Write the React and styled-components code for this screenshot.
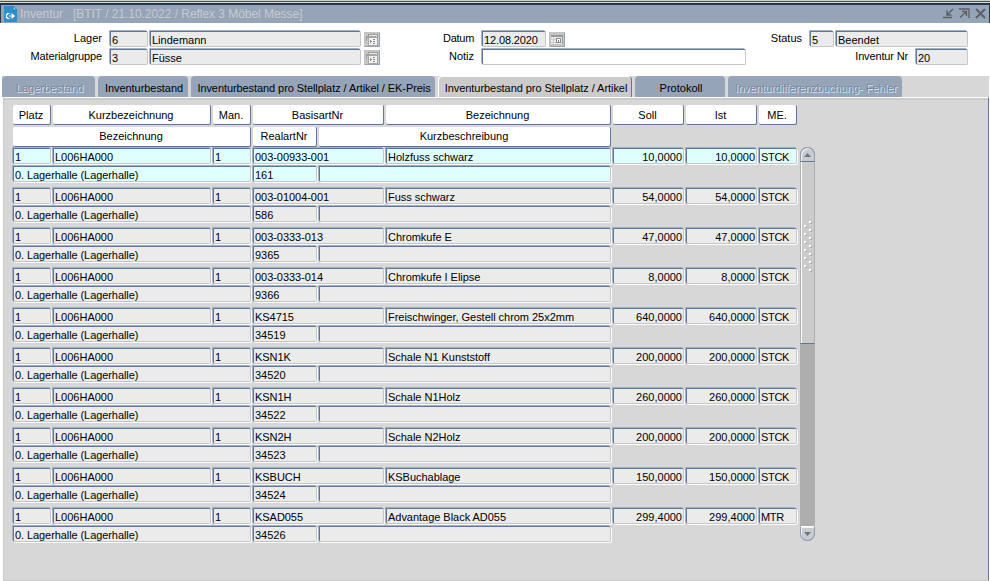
import React from 'react';
import styled, { createGlobalStyle } from "styled-components";


const GlobalStyle = createGlobalStyle`
  * {
    box-sizing: border-box;
  }
  body {
    margin: 0;
    overflow: hidden;
    background: #fff;
    color: #000;
    font-family: "Liberation Sans", Arial, sans-serif;
    font-size: 11px;
  }
`;

const Window = styled.div`
  width: 990px;
  height: 581px;
  display: flex;
  flex-direction: column;
`;

const TopEdge = styled.div`
  height: 5px;
  flex: none;
  background: linear-gradient(#c9d1c9 0 1px, #4c5358 1px 2px, #d2d9d2 2px 3px, #26374c 3px 5px);
`;

const TitleBar = styled.div`
  height: 18px;
  flex: none;
  display: flex;
  align-items: center;
  padding: 0 3px 0 3px;
  background: #96a4b8;
  border-left: 1px solid #26374c;
  border-right: 1px solid #26374c;
  svg {
    flex: none;
  }
`;

const Title = styled.div`
  flex: 1;
  padding-left: 3px;
  font-size: 12px;
  line-height: 18px;
  letter-spacing: -0.04px;
  white-space: pre;
  color: #c5cad0;
`;

const WindowButtons = styled.div`
  display: flex;
  gap: 5px;
  margin-top: -1px;
`;

const Form = styled.div`
  height: 53px;
  flex: none;
  padding-top: 7px;
  background: #fff;
`;

const FormRow = styled.div`
  height: 18px;
  display: flex;
`;

const Label = styled.div`
  width: ${(p) => p.$width}px;
  padding-right: 7px;
  text-align: right;
  line-height: 16px;
  letter-spacing: ${(p) => p.$spacing || 0}px;
  white-space: nowrap;
`;

const Field = styled.div`
  width: ${(p) => (p.$width ? p.$width - 2 + "px" : "auto")};
  height: 16px;
  margin: 1px;
  padding: ${(p) => (p.$right ? "0 1px 0 0" : "0 0 0 1px")};
  grid-column: ${(p) => p.$col || "auto"};
  background: ${(p) => p.$bg || "#ebebeb"};
  border: 1px solid #5f7898;
  border-right-color: #c6c6c6;
  border-bottom-color: #c6c6c6;
  border-radius: 1px 2px 2px 2px;
  box-shadow: -1px -1px 0 #a3b0c2, 1px 1px 0 #fff;
  line-height: 16px;
  letter-spacing: ${(p) => p.$spacing || 0}px;
  text-align: ${(p) => (p.$right ? "right" : "left")};
  white-space: nowrap;
`;

const PickButton = styled.div`
  width: 16px;
  height: 15px;
  margin: 2px 0 0 2px;
  background: #c6c6c6;
  border: 1px solid #c0c3c8;
  border-right-color: #94a3b7;
  border-bottom-color: #94a3b7;
  svg {
    display: block;
  }
`;

const Tabs = styled.div`
  height: 21px;
  flex: none;
  display: flex;
  gap: 3px;
  margin: 0 1px 0 2px;
  background: #d7d7d7;
`;

const Tab = styled.div`
  width: ${(p) => p.$width}px;
  height: 21px;
  padding: 4px 0 0 2px;
  border-radius: 4px 4px 0 0;
  text-align: center;
  line-height: 16px;
  letter-spacing: ${(p) => p.$spacing || 0}px;
  white-space: nowrap;
  background: ${(p) => (p.$active ? "#cbcbcb" : "#96a4b8")};
  color: ${(p) => (p.$disabled ? "#7388a5" : "#000")};
  text-shadow: ${(p) => (p.$disabled ? "1px 1px 0 #dfe4ea" : "none")};
  box-shadow: ${(p) => (p.$active ? "inset 1px 1px 0 #fff, inset -1px 0 0 #5f7898" : "none")};
`;

const Panel = styled.div`
  flex: 1;
  margin: 0 1px 0 3px;
  padding: 4px 0 0 8px;
  display: flex;
  background: #d7d7d7;
  border: 1px solid #cacaca;
  border-top-color: #fff;
  border-right-color: #5f7898;
  box-shadow: inset 0 2px 0 #cbcbcb;
`;

const Table = styled.div`
  width: 786px;
`;

const Columns = styled.div`
  display: grid;
  grid-template-columns: 40px 160px 40px 66px 67px 227px 73px 73px 40px;
`;

const HeaderRows = styled(Columns)`
  padding-top: 3px;
  row-gap: 2px;
  height: 45px;
  grid-auto-rows: 20px;
`;

const HeaderCell = styled.div`
  grid-column: ${(p) => p.$col};
  height: 20px;
  margin: 0 1px;
  padding-right: 1px;
  background: #fff;
  border-right: 1px solid #5f7898;
  border-bottom: 1px solid #5f7898;
  border-radius: 2px;
  line-height: ${(p) => (p.$lower ? 18 : 20)}px;
  text-align: center;
`;

const Record = styled(Columns)`
  height: 40px;
  grid-auto-rows: 18px;
`;

const ScrollBar = styled.div`
  width: 15px;
  height: 394px;
  margin: 45px 0 0 2px;
  display: flex;
  flex-direction: column;
  border-radius: 8px;
  background: #aeaeae;
`;

const ScrollButton = styled.div`
  height: 15px;
  display: flex;
  align-items: center;
  justify-content: center;
  background: #cbcbcb;
  border: 1px solid #8b9cb3;
  border-radius: ${(p) => (p.$up ? "8px 8px 0 0" : "0 0 8px 8px")};
  border-top-color: ${(p) => (p.$up ? "#8b9cb3" : "#fff")};
  border-bottom-color: ${(p) => (p.$up ? "#5f7898" : "#8b9cb3")};
  box-shadow: inset 1px 1px 0 #f4f4f4;
`;

const Thumb = styled.div`
  height: 182px;
  padding: 59px 0 0 3px;
  background: #cbcbcb;
  border: 1px solid #b0b0b0;
  border-top: 0;
  border-bottom: 1px solid #5f7898;
  box-shadow: inset 1px 0 0 #fff;
`;

const Track = styled.div`
  flex: 1;
  background: #aeaeae;
`;

const records = [
  ["003-00933-001", "Holzfuss schwarz", "10,0000", "STCK", "161"],
  ["003-01004-001", "Fuss schwarz", "54,0000", "STCK", "586"],
  ["003-0333-013", "Chromkufe E", "47,0000", "STCK", "9365"],
  ["003-0333-014", "Chromkufe I Elipse", "8,0000", "STCK", "9366"],
  ["KS4715", "Freischwinger, Gestell chrom 25x2mm", "640,0000", "STCK", "34519"],
  ["KSN1K", "Schale N1 Kunststoff", "200,0000", "STCK", "34520"],
  ["KSN1H", "Schale N1Holz", "260,0000", "STCK", "34522"],
  ["KSN2H", "Schale N2Holz", "200,0000", "STCK", "34523"],
  ["KSBUCH", "KSBuchablage", "150,0000", "STCK", "34524"],
  ["KSAD055", "Advantage Black AD055", "299,4000", "MTR", "34526"],
];

const AppIcon = () => (
  <svg width="13" height="17" viewBox="0 0 13 17">
    <path d="M0 0h9l4 4v12H0z" fill="#2d8fd0" />
    <path d="M9 0v4h4z" fill="#8fc4e6" stroke="#2272a8" strokeWidth=".7" />
    <path d="M5.500 7.500H3.500v1h-1v3h1v1h2M5 10h2" fill="none" stroke="#fff" strokeWidth="1.2" />
    <path d="M7.500 7l3.500 3-3.500 3z" fill="#fff" />
  </svg>
);

const ListIcon = () => (
  <svg width="14" height="13" viewBox="0 0 14 13" shapeRendering="crispEdges">
    <path d="M3 1h10v6h-1V3H3z" fill="#999" />
    <path d="M4 2h8v1H4z" fill="#f0f0f0" />
    <path d="M1 3h10v2H2v3H1z" fill="#a0a0a0" />
    <path d="M3 5h9v7H3z" fill="#f2f2f2" />
    <path d="M3 4h9v8H3V5" fill="none" stroke="#a8a8a8" />
    <path d="M5 7h1v3H5zM6 8h1v1H6zM8 6h2v1H8zM8 8h2v1H8zM8 10h2v1H8z" fill="#8c8c8c" />
  </svg>
);

const CalendarIcon = () => (
  <svg width="14" height="13" viewBox="0 0 14 13" shapeRendering="crispEdges">
    <path d="M1 2h12v9H1z" fill="#ececec" />
    <path d="M1 2h12v2H1zM12 4h1v7h-1z" fill="#999" />
    <path d="M1 6.500h6M1 9.500h11M3.500 4v7" stroke="#cfcfcf" />
    <path d="M6.500 5.500h4v4h-4z" fill="#fff" stroke="#8a8a8a" />
    <path d="M8 7h1v2H8z" fill="#8a8a8a" />
  </svg>
);

const Grip = () => (
  <svg width="9" height="52" viewBox="0 0 9 52" shapeRendering="crispEdges">
    {[...Array(13)].map((_, i) => {
      const x = i % 2 ? 0 : 5;
      const y = i * 4;
      return (
        <g key={i}>
          <path d={`M${x + 1} ${y + 1}h2v2h-2z`} fill="#9fabbc" />
          <path d={`M${x} ${y}h2v2h-2z`} fill="#fff" />
        </g>
      );
    })}
  </svg>
);

const App = () => {
  return (
    <Window>
      <GlobalStyle />
      <TopEdge />
      <TitleBar>
        <AppIcon />
        <Title>{"Inventur   [BTIT / 21.10.2022 / Reflex 3 Möbel Messe]"}</Title>
        <WindowButtons>
          <svg width="11" height="11" viewBox="0 0 11 11" fill="none" stroke="#5d6065" strokeWidth="1.5">
            <path d="M10 1L4.500 6.500M4 2.500V7h4.500M0 9.500h9" />
          </svg>
          <svg width="11" height="11" viewBox="0 0 11 11" fill="none" stroke="#5d6065" strokeWidth="1.3">
            <path d="M0 1h10v9M1 9.500L7 4M3 3.500h4.500V8" />
          </svg>
          <svg width="11" height="11" viewBox="0 0 11 11" fill="none" stroke="#5d6065" strokeWidth="2">
            <path d="M1 1l9 9M10 1L1 10" />
          </svg>
        </WindowButtons>
      </TitleBar>

      <Form>
        <FormRow>
          <Label $width={109}>Lager</Label>
          <Field $width={40}>6</Field>
          <Field $width={213}>Lindemann</Field>
          <PickButton><ListIcon /></PickButton>
          <Label $width={101} $spacing={-0.3}>Datum</Label>
          <Field $width={66} $spacing={-0.12}>12.08.2020</Field>
          <PickButton><CalendarIcon /></PickButton>
          <Label $width={244}>Status</Label>
          <Field $width={26}>5</Field>
          <Field $width={134}>Beendet</Field>
        </FormRow>
        <FormRow>
          <Label $width={109} $spacing={-0.14}>Materialgruppe</Label>
          <Field $width={40}>3</Field>
          <Field $width={213}>Füsse</Field>
          <PickButton><ListIcon /></PickButton>
          <Label $width={101}>Notiz</Label>
          <Field $width={266} $bg="#fff" />
          <Label $width={168} $spacing={-0.15}>Inventur Nr</Label>
          <Field $width={54}>20</Field>
        </FormRow>
      </Form>

      <Tabs>
        <Tab $width={93} $disabled>Lagerbestand</Tab>
        <Tab $width={90} $spacing={-0.06}>Inventurbestand</Tab>
        <Tab $width={244} $spacing={-0.08}>Inventurbestand pro Stellplatz / Artikel / EK-Preis</Tab>
        <Tab $width={194} $active $spacing={-0.05}>Inventurbestand pro Stellplatz / Artikel</Tab>
        <Tab $width={90}>Protokoll</Tab>
        <Tab $width={174} $disabled>Inventurdifferenzbuchung- Fehler</Tab>
      </Tabs>

      <Panel>
        <Table>
          <HeaderRows>
            <HeaderCell $col="1">Platz</HeaderCell>
            <HeaderCell $col="2">Kurzbezeichnung</HeaderCell>
            <HeaderCell $col="3">Man.</HeaderCell>
            <HeaderCell $col="4 / 6">BasisartNr</HeaderCell>
            <HeaderCell $col="6">Bezeichnung</HeaderCell>
            <HeaderCell $col="7">Soll</HeaderCell>
            <HeaderCell $col="8">Ist</HeaderCell>
            <HeaderCell $col="9">ME.</HeaderCell>
            <HeaderCell $lower $col="1 / 4">Bezeichnung</HeaderCell>
            <HeaderCell $lower $col="4">RealartNr</HeaderCell>
            <HeaderCell $lower $col="5 / 7">Kurzbeschreibung</HeaderCell>
          </HeaderRows>

          {records.map(([artNr, name, amount, unit, realNr], i) => {
            const bg = i === 0 ? "#dfffff" : "#ebebeb";
            return (
              <Record key={realNr}>
                <Field $bg={bg} $col="1">1</Field>
                <Field $bg={bg} $col="2">L006HA000</Field>
                <Field $bg={bg} $col="3">1</Field>
                <Field $bg={bg} $col="4 / 6" $spacing={-0.04}>{artNr}</Field>
                <Field $bg={bg} $col="6" $spacing={-0.03}>{name}</Field>
                <Field $bg={bg} $col="7" $right>{amount}</Field>
                <Field $bg={bg} $col="8" $right>{amount}</Field>
                <Field $bg={bg} $col="9" $spacing={-0.3}>{unit}</Field>
                <Field $bg={bg} $col="1 / 4" $spacing={-0.08}>0. Lagerhalle (Lagerhalle)</Field>
                <Field $bg={bg} $col="4">{realNr}</Field>
                <Field $bg={bg} $col="5 / 7" />
              </Record>
            );
          })}
        </Table>

        <ScrollBar>
          <ScrollButton $up>
            <svg width="7" height="4" viewBox="0 0 7 4"><path d="M0 4L3.500 0 7 4z" fill="#5f7898" /></svg>
          </ScrollButton>
          <Thumb><Grip /></Thumb>
          <Track />
          <ScrollButton>
            <svg width="7" height="4" viewBox="0 0 7 4"><path d="M0 0L3.500 4 7 0z" fill="#5f7898" /></svg>
          </ScrollButton>
        </ScrollBar>
      </Panel>
    </Window>
  )
}

export default App
